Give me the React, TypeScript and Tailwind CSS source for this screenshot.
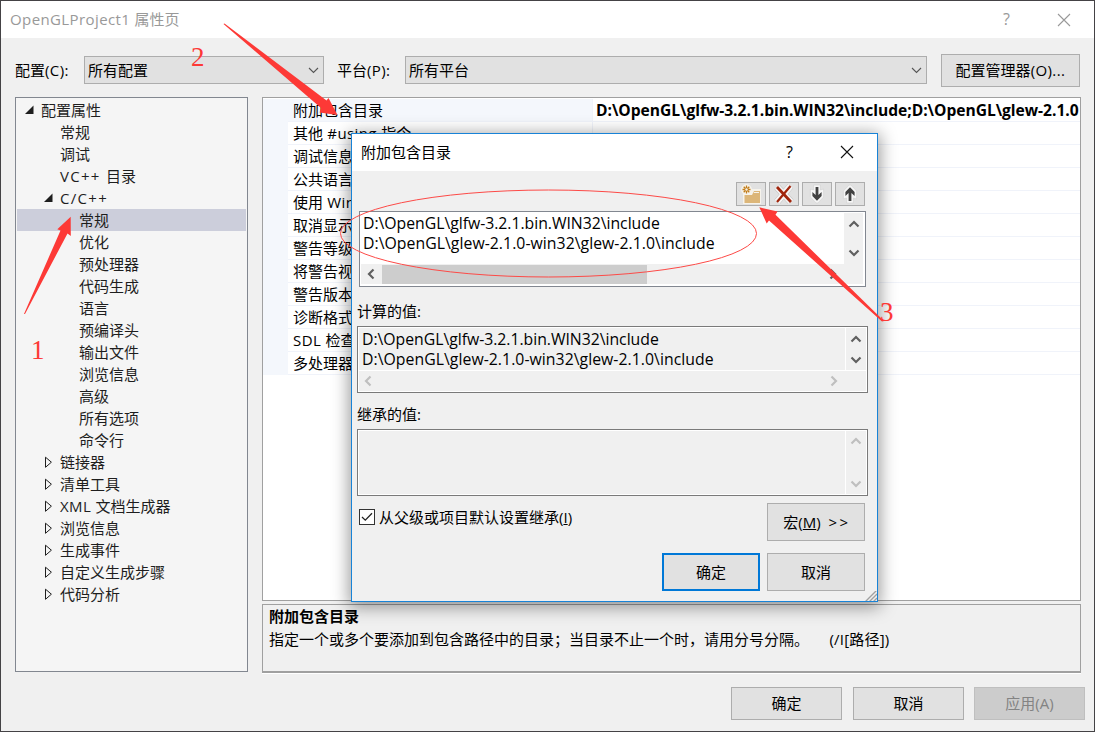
import React from 'react';

type TreeState = 'open' | 'closed' | 'leaf';

interface TreeNode {
  label: string;
  depth: number;
  state: TreeState;
  selected?: boolean;
}

const treeNodes: TreeNode[] = [
  { label: '配置属性', depth: 0, state: 'open' },
  { label: '常规', depth: 1, state: 'leaf' },
  { label: '调试', depth: 1, state: 'leaf' },
  { label: 'VC++ 目录', depth: 1, state: 'leaf' },
  { label: 'C/C++', depth: 1, state: 'open' },
  { label: '常规', depth: 2, state: 'leaf', selected: true },
  { label: '优化', depth: 2, state: 'leaf' },
  { label: '预处理器', depth: 2, state: 'leaf' },
  { label: '代码生成', depth: 2, state: 'leaf' },
  { label: '语言', depth: 2, state: 'leaf' },
  { label: '预编译头', depth: 2, state: 'leaf' },
  { label: '输出文件', depth: 2, state: 'leaf' },
  { label: '浏览信息', depth: 2, state: 'leaf' },
  { label: '高级', depth: 2, state: 'leaf' },
  { label: '所有选项', depth: 2, state: 'leaf' },
  { label: '命令行', depth: 2, state: 'leaf' },
  { label: '链接器', depth: 1, state: 'closed' },
  { label: '清单工具', depth: 1, state: 'closed' },
  { label: 'XML 文档生成器', depth: 1, state: 'closed' },
  { label: '浏览信息', depth: 1, state: 'closed' },
  { label: '生成事件', depth: 1, state: 'closed' },
  { label: '自定义生成步骤', depth: 1, state: 'closed' },
  { label: '代码分析', depth: 1, state: 'closed' },
];

const properties = [
  '附加包含目录',
  '其他 #using 指令',
  '调试信息',
  '公共语言',
  '使用 Win',
  '取消显示',
  '警告等级',
  '将警告视',
  '警告版本',
  '诊断格式',
  'SDL 检查',
  '多处理器',
];

const includePaths = [
  'D:\\OpenGL\\glfw-3.2.1.bin.WIN32\\include',
  'D:\\OpenGL\\glew-2.1.0-win32\\glew-2.1.0\\include',
];

const indents = ['pl-[6px]', 'pl-[25px]', 'pl-[44px]'];

// Latin runs are set slightly wider than the Chinese text around them
const Mixed: React.FC<{ text: string }> = ({ text }) => (
  <span className="whitespace-pre">
    {text.split(/([ -~]+)/).map((part, i) => {
      if (i % 2 === 0) return part;
      return (
        <span key={i} className={part.includes('++') ? 'tracking-[1.3px]' : 'tracking-[0.4px]'}>
          {part}
        </span>
      );
    })}
  </span>
);

const Expander: React.FC<{ state: TreeState }> = ({ state }) => (
  <svg width="18" height="22" viewBox="0 0 18 22" className="shrink-0">
    {state === 'open' && <path d="M10.5 6.5V15H2Z" fill="#1e1e1e" />}
    {state === 'closed' && <path d="M3.5 6.2V16.3L9.4 11.2Z" fill="none" stroke="#1e1e1e" />}
  </svg>
);

type Direction = 'up' | 'down' | 'left' | 'right';

const arrowPaths: Record<Direction, string> = {
  up: 'M1.5 8.5L6 4L10.5 8.5',
  down: 'M1.5 3.5L6 8L10.5 3.5',
  left: 'M8.5 1.5L4 6L8.5 10.5',
  right: 'M3.5 1.5L8 6L3.5 10.5',
};

const ScrollArrow: React.FC<{ direction: Direction; disabled?: boolean }> = ({ direction, disabled }) => (
  <svg width="12" height="12" viewBox="0 0 12 12" className="shrink-0">
    <path d={arrowPaths[direction]} fill="none" stroke={disabled ? '#bfbfbf' : '#606060'} strokeWidth="2.2" />
  </svg>
);

const Combo: React.FC<{ value: string; className: string }> = ({ value, className }) => (
  <div className={`flex h-7 items-center justify-between border border-[#adadad] bg-[#e1e1e1] pr-1 pl-[3px] ${className}`}>
    <span>{value}</span>
    <svg width="11" height="7" viewBox="0 0 11 7">
      <path d="M1 1L5.5 5.5L10 1" fill="none" stroke="#555" strokeWidth="1.1" />
    </svg>
  </div>
);

const Button: React.FC<{ className: string; children: React.ReactNode }> = ({ className, children }) => (
  <button className={`flex items-center justify-center whitespace-pre ${className}`}>{children}</button>
);

const CloseIcon: React.FC<{ color: string }> = ({ color }) => (
  <svg width="14" height="14" viewBox="0 0 14 14">
    <path d="M1 1L13 13M13 1L1 13" stroke={color} strokeWidth="1.1" />
  </svg>
);

const ToolButton: React.FC<{ children: React.ReactNode }> = ({ children }) => (
  <div className="flex h-6 w-[30px] items-center justify-center border border-[#adadad] bg-[#e1e1e1]">
    <svg width="22" height="20" viewBox="0 0 22 20">{children}</svg>
  </div>
);

const downArrow = 'M9.6 3H12.4V11L15.6 8V12L11 16.8L6.4 12V8L9.6 11Z';

const ArrowGlyph = () => (
  <>
    <path d="M7.6 1H14.4V6L17.6 5V13L11.8 19H10.2L4.4 13V5L7.6 6Z" fill="#f6f6f6" stroke="#d0d0d0" strokeWidth="0.6" />
    <path d={downArrow} fill="#424242" />
  </>
);

const Toolbar = () => (
  <div className="flex justify-end gap-[3px] pr-3">
    <ToolButton>
      <path d="M3 8H10L12 5H21V20H3Z" fill="#f6f3ec" />
      <circle cx="6.5" cy="5.5" r="5.4" fill="#f6f3ec" />
      <path d="M4.5 11H12L14 7H20V19H4.5Z" fill="#dcb679" />
      <path d="M13.8 8.5H19" stroke="#f6f3ec" />
      <path d="M6.5 1.5V9.5M2.5 5.5H10.5M3.7 2.7L9.3 8.3M9.3 2.7L3.7 8.3" stroke="#c27d1a" strokeWidth="1.3" />
      <circle cx="6.5" cy="5.5" r="1.2" fill="#f6f3ec" />
    </ToolButton>
    <ToolButton>
      <path d="M4 3L18 18M17.5 2L4 18" stroke="#c4c4c4" strokeWidth="7" />
      <path d="M4 3L18 18M17.5 2L4 18" stroke="#f6f6f6" strokeWidth="6" />
      <path d="M4 3L18 18" stroke="#a1260d" strokeWidth="2.8" />
      <path d="M17.5 2L4 18" stroke="#a1260d" strokeWidth="2.2" />
    </ToolButton>
    <ToolButton>
      <ArrowGlyph />
    </ToolButton>
    <ToolButton>
      <g transform="matrix(1 0 0 -1 0 20)">
        <ArrowGlyph />
      </g>
    </ToolButton>
  </div>
);

const PathLines = () => (
  <>
    {includePaths.map((path, i) => (
      <div
        key={path}
        className={`h-5 text-[15.8px] leading-5 whitespace-pre ${i === 0 ? 'tracking-[-0.03px]' : 'tracking-[0.04px]'}`}
      >
        {path}
      </div>
    ))}
  </>
);

const IncludeDialog = () => (
  <div className="absolute top-[132px] left-[350px] flex h-[469px] w-[527px] flex-col border border-[#1883d7] bg-[#f0f0f0] shadow-[0_3px_16px_2px_rgba(0,0,0,0.4)]">
    <div className="flex h-[37px] shrink-0 items-center bg-white pb-0.5 pl-[9px]">
      <span className="flex-1">附加包含目录</span>
      <span className="w-[54px] text-[16px]">?</span>
      <span className="mr-[23px]"><CloseIcon color="#111" /></span>
    </div>
    <div className="shrink-0 pt-[11px]">
      <Toolbar />
    </div>
    <div className="mt-[5px] ml-[7px] flex h-[76px] w-[507px] shrink-0 flex-col border border-[#828790] bg-white p-px pb-0.5">
      <div className="flex h-[52px]">
        <div className="flex-1 bg-white pl-0.5">
          <PathLines />
        </div>
        <div className="mr-px flex w-[19px] flex-col items-center justify-between bg-[#f0f0f0] pt-[5px] pb-[5px]">
          <ScrollArrow direction="up" />
          <ScrollArrow direction="down" />
        </div>
      </div>
      <div className="mr-px flex h-5 items-center bg-[#f0f0f0] pl-1">
        <ScrollArrow direction="left" />
        <div className="mr-auto ml-[5px] h-[19px] w-[265px] bg-[#cdcdcd]" />
        <div className="mr-[24px] flex"><ScrollArrow direction="right" /></div>
      </div>
    </div>
    <div className="mt-[13px] ml-[5px] h-[22px] shrink-0 leading-[22px]">计算的值:</div>
    <div className="mt-1 ml-[5px] flex h-[67px] w-[511px] shrink-0 flex-col border border-[#7a7a7a] p-px shadow-[inset_0_0_0_1px_#fff]">
      <div className="flex h-[43px] border-b border-white">
        <div className="flex-1 border-r border-white pt-px pl-[3px]">
          <PathLines />
        </div>
        <div className="flex w-[20px] flex-col items-center gap-[9px] pt-[5px]">
          <ScrollArrow direction="up" />
          <ScrollArrow direction="down" />
        </div>
      </div>
      <div className="flex flex-1 items-center justify-between pr-[26px] pl-[3px]">
        <ScrollArrow direction="left" disabled />
        <ScrollArrow direction="right" disabled />
      </div>
    </div>
    <div className="mt-[10px] ml-[5px] h-[22px] shrink-0 leading-[22px]">继承的值:</div>
    <div className="mt-1 ml-[5px] flex h-[67px] w-[511px] shrink-0 justify-end border border-[#7a7a7a] pr-px shadow-[inset_0_0_0_1px_#fff]">
      <div className="flex w-[21px] flex-col items-center justify-between border-l border-white py-[5px]">
        <ScrollArrow direction="up" disabled />
        <ScrollArrow direction="down" disabled />
      </div>
    </div>
    <div className="mt-[7px] flex h-[38px] shrink-0 items-start justify-between pr-3 pl-[7px]">
      <label className="mt-[3px] flex items-center">
        <svg width="16" height="16" viewBox="0 0 16 16">
          <rect x="0.5" y="0.5" width="15" height="15" fill="#fff" stroke="#333" />
          <path d="M3 8L6.3 11.2L13 4.3" fill="none" stroke="#222" strokeWidth="1.3" />
        </svg>
        <span className="ml-1">从父级或项目默认设置继承(<u>I</u>)</span>
      </label>
      <Button className="h-[38px] w-[98px] border border-[#adadad] bg-[#e1e1e1]">
        宏(<u>M</u>){'  '}<span className="-mr-[2px] tracking-[2.5px]">&gt;&gt;</span>
      </Button>
    </div>
    <div className="mt-3 flex shrink-0 justify-end gap-[7px] pr-3">
      <Button className="h-[38px] w-[98px] border-2 border-[#0078d7] bg-[#e1e1e1]">确定</Button>
      <Button className="h-[38px] w-[98px] border border-[#adadad] bg-[#e1e1e1]">取消</Button>
    </div>
    <svg width="12" height="10" viewBox="0 0 12 10" className="ml-auto shrink-0">
      <path d="M0 11L12 -1M4 11L12 3M8 11L12 7" stroke="#a0a0a0" strokeWidth="1.4" />
    </svg>
  </div>
);

// Red markup drawn over the window
const Annotations = () => (
  <svg width="1095" height="732" viewBox="0 0 1095 732" className="pointer-events-none absolute -top-px -left-px">
    <g fill="#fd3936">
      <path d="M24 314L60.5 230.5L57.3 229.3L70.7 216.7L70.8 236L67.5 233.5L25 314Z" />
      <path d="M223.5 24L224.5 23.5L326.5 100.5L328.5 98L337.5 115L319.5 112.5L321 108Z" />
      <path d="M759.3 207.3L777.5 211.5L775.5 214.8L884 321L882 321.5L769 220.5L766.7 223.5Z" />
    </g>
    <ellipse cx="548.5" cy="233.5" rx="208" ry="43.5" fill="none" stroke="#fd4a47" />
    <g fill="#fd3936" fontFamily="Liberation Serif, serif" fontSize="27">
      <text x="31" y="359">1</text>
      <text x="191" y="66">2</text>
      <text x="880" y="321">3</text>
    </g>
  </svg>
);

const App: React.FC = () => {
  return (
    <div className="relative flex h-[732px] w-[1095px] flex-col overflow-hidden border border-[#444245] bg-[#f0f0f0] font-['Open_Sans','Noto_Sans_CJK_SC',sans-serif] text-[15px] leading-[22px] text-black">
      {/* Title bar */}
      <div className="flex h-[37px] shrink-0 items-center bg-white pl-[9px] text-[#999]">
        <span className="flex-1 pb-px"><Mixed text="OpenGLProject1 属性页" /></span>
        <span className="w-[54px] pb-0.5 text-[16px]">?</span>
        <span className="mr-[23px]"><CloseIcon color="#999" /></span>
      </div>

      {/* Configuration row */}
      <div className="flex h-[59px] shrink-0 items-center pt-[5px] pl-[14px]">
        <span className="w-[69px]"><Mixed text="配置(C):" /></span>
        <Combo value="所有配置" className="w-[240px]" />
        <span className="ml-[13px] w-[68px]"><Mixed text="平台(P):" /></span>
        <Combo value="所有平台" className="w-[522px]" />
        <Button className="ml-[14px] h-[33px] w-[139px] border border-[#adadad] bg-[#e1e1e1]">
          <Mixed text="配置管理器(O)..." />
        </Button>
      </div>

      <div className="flex h-[576px] shrink-0 items-start gap-[14px] pl-[14px]">
        {/* Tree */}
        <div className="h-[575px] w-[233px] border border-[#828790] bg-[#f5f5f5] p-px text-[#1e1e1e]">
          {treeNodes.map((node, i) => (
            <div
              key={i}
              className={`flex h-[22px] items-center ${indents[node.depth]} ${node.selected ? 'bg-[#cccedb]' : ''}`}
            >
              <Expander state={node.state} />
              <Mixed text={node.label} />
            </div>
          ))}
        </div>

        <div className="flex w-[819px] flex-col gap-[3px]">
          {/* Property grid */}
          <div className="h-[504px] border border-[#a0a0a0] bg-white pt-px">
            {properties.map((name, i) => (
              <div key={name} className="flex h-[23px] bg-[#f4f7fc]">
                <div className="w-[25px]" />
                <div className={`w-[304px] border-b border-[#f0f3fa] pl-[5px] whitespace-nowrap ${i === 0 ? '' : 'bg-white'}`}>
                  <Mixed text={name} />
                </div>
                <div className="flex-1 overflow-hidden border-b border-l border-[#f0f3fa] bg-white pl-[3px] text-[15.6px] font-bold tracking-[-0.03px] whitespace-nowrap">
                  {i === 0 && 'D:\\OpenGL\\glfw-3.2.1.bin.WIN32\\include;D:\\OpenGL\\glew-2.1.0'}
                </div>
              </div>
            ))}
          </div>

          {/* Description */}
          <div className="h-[69px] border border-b-2 border-[#a0a0a0] pl-[6px] shadow-[0_1px_0_#fff]">
            <div className="font-bold">附加包含目录</div>
            <div className="mt-px whitespace-pre">
              指定一个或多个要添加到包含路径中的目录；当目录不止一个时，请用分号分隔。
              <span className="tracking-[0.2px]">{'     '}(/I[路径])</span>
            </div>
          </div>
        </div>
      </div>

      {/* Footer buttons */}
      <div className="mt-[14px] flex pl-[730px]">
        <Button className="h-[33px] w-[111px] border border-[#adadad] bg-[#e1e1e1] pb-0.5">确定</Button>
        <Button className="ml-[11px] h-[33px] w-[111px] border border-[#adadad] bg-[#e1e1e1] pb-0.5">取消</Button>
        <Button className="ml-[10px] h-[33px] w-[111px] border border-[#bfbfbf] bg-[#ccc] pb-0.5 text-[#838383]">应用(A)</Button>
      </div>

      <IncludeDialog />
      <Annotations />
    </div>
  );
};

export default App;
